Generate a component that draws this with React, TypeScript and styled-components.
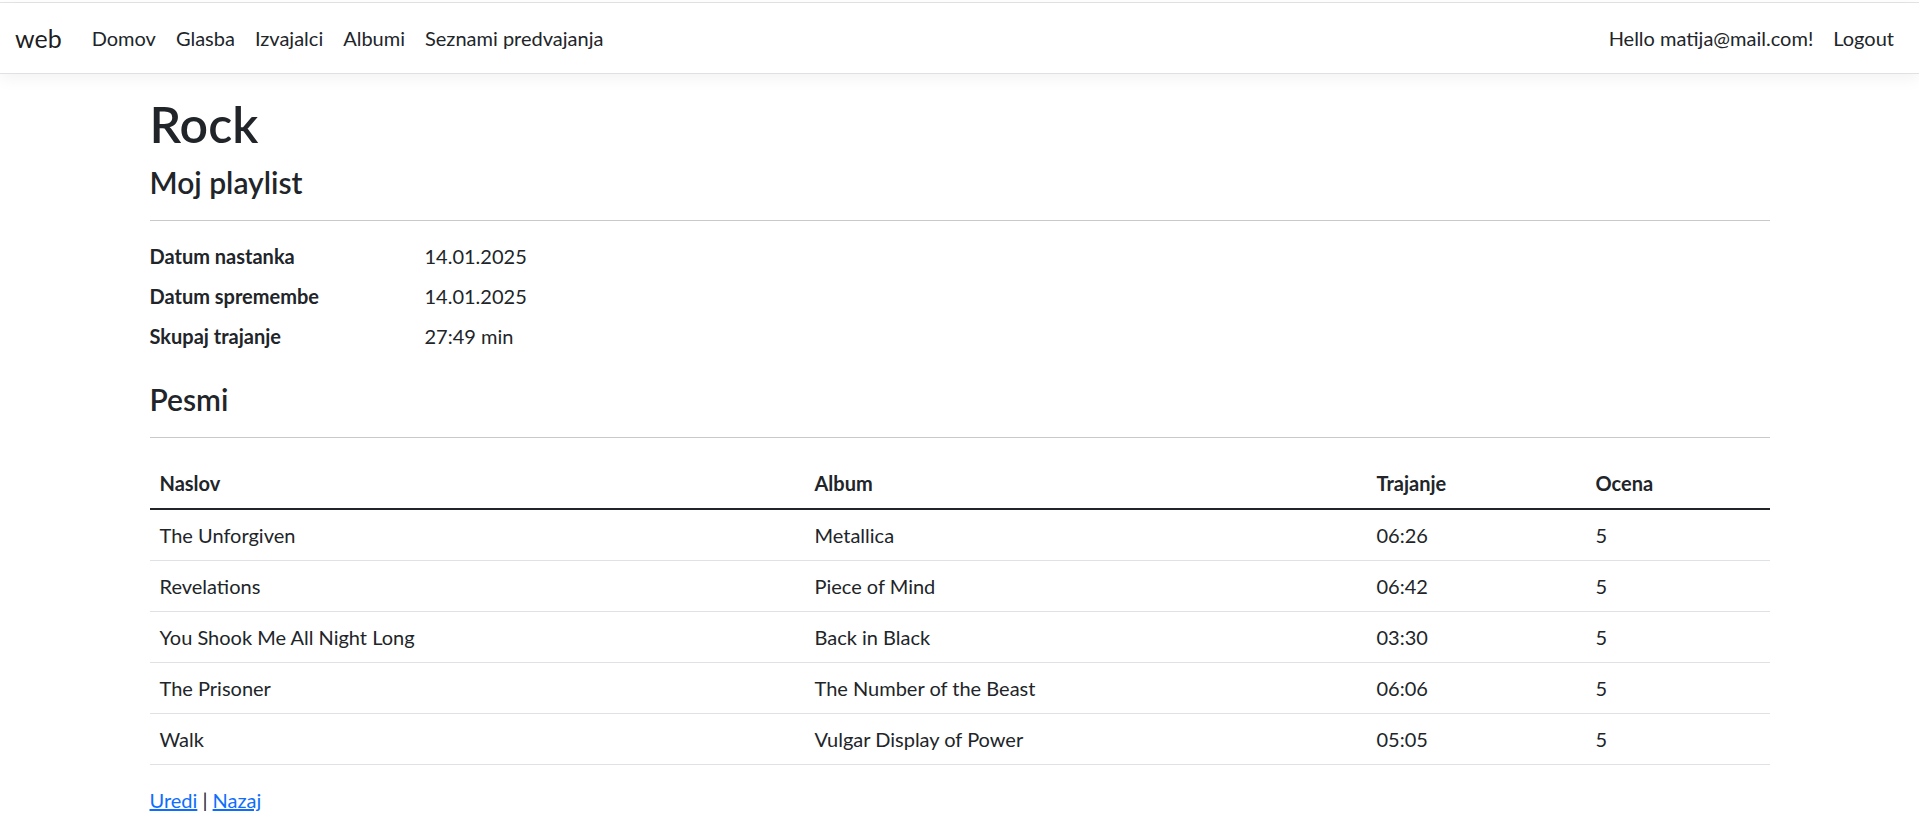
import React from "react";
import styled, { createGlobalStyle } from "styled-components";

const FONT = `Lato, "Open Sans", "Noto Sans", sans-serif`;

const Global = createGlobalStyle`
  html, body { margin: 0; padding: 0; background: #fff; }
  body {
    font-family: ${FONT};
    font-size: 20px;
    line-height: 30px;
    color: #212529;
  }
  * { box-sizing: border-box; }
`;

const TopLine = styled.div`
  height: 3px;
  border-bottom: 1px solid #e4e4e4;
  background: #fff;
`;

const NavBar = styled.nav`
  display: flex;
  align-items: center;
  justify-content: space-between;
  height: 71px;
  padding: 0 15px;
  background: #fff;
  border-bottom: 1.25px solid #dee2e6;
  box-shadow: 0 5px 15px rgba(0, 0, 0, 0.05);
  margin-bottom: 20px;
`;

const NavGroup = styled.div`
  display: flex;
  align-items: center;
`;

const Brand = styled.a`
  font-size: 25px;
  line-height: 37px;
  color: rgba(0, 0, 0, 0.9);
  text-decoration: none;
  margin-right: 20px;
`;

const NavLink = styled.a`
  padding: 10px 10px;
  color: #212529;
  text-decoration: none;
  font-size: 20px;
`;

const Greeting = styled.span`
  padding: 10px 10px;
  color: #212529;
`;

const Container = styled.main`
  width: 1620px;
  margin: 0 auto;
  padding-bottom: 20px;
`;

const Title = styled.h1`
  font-size: 50px;
  line-height: 60px;
  font-weight: 600;
  margin: 1px 0 10px;
`;

const SubTitle = styled.h4<{ $mt?: number }>`
  font-size: 30px;
  line-height: 36px;
  font-weight: 600;
  margin: ${(p) => p.$mt ?? 0}px 0 20px;
`;

const Rule = styled.hr`
  border: 0;
  border-top: 1.25px solid #c8c9ca;
  margin: 0 0 20px;
`;

const DefList = styled.dl`
  display: grid;
  grid-template-columns: 275px 1fr;
  margin: 0 0 20px;
`;

const Term = styled.dt`
  font-weight: 700;
  margin: 0 0 10px;
`;

const Desc = styled.dd`
  margin: 0 0 10px;
`;

const Table = styled.table`
  width: 100%;
  border-collapse: collapse;
  margin-bottom: 20px;
`;

const HeadCell = styled.th`
  text-align: left;
  font-weight: 700;
  padding: 10px;
  border-bottom: 2px solid #212529;
`;

const Cell = styled.td`
  padding: 10px;
  border-bottom: 1.25px solid #dee2e6;
`;

const Links = styled.div`
  line-height: 30px;
`;

const Link = styled.a`
  color: #0d6efd;
  text-decoration: underline;
`;

const songs = [
  ["The Unforgiven", "Metallica", "06:26", "5"],
  ["Revelations", "Piece of Mind", "06:42", "5"],
  ["You Shook Me All Night Long", "Back in Black", "03:30", "5"],
  ["The Prisoner", "The Number of the Beast", "06:06", "5"],
  ["Walk", "Vulgar Display of Power", "05:05", "5"],
];

const colWidths = [655, 562, 219, 184];

export default function App() {
  return (
    <>
      <Global />
      <TopLine />
      <NavBar>
        <NavGroup>
          <Brand href="#">web</Brand>
          <NavLink href="#">Domov</NavLink>
          <NavLink href="#">Glasba</NavLink>
          <NavLink href="#">Izvajalci</NavLink>
          <NavLink href="#">Albumi</NavLink>
          <NavLink href="#">Seznami predvajanja</NavLink>
        </NavGroup>
        <NavGroup>
          <Greeting>Hello matija@mail.com!</Greeting>
          <NavLink href="#">Logout</NavLink>
        </NavGroup>
      </NavBar>
      <Container>
        <Title>Rock</Title>
        <SubTitle>Moj playlist</SubTitle>
        <Rule />
        <DefList>
          <Term>Datum nastanka</Term>
          <Desc>14.01.2025</Desc>
          <Term>Datum spremembe</Term>
          <Desc>14.01.2025</Desc>
          <Term>Skupaj trajanje</Term>
          <Desc>27:49 min</Desc>
        </DefList>
        <SubTitle $mt={1}>Pesmi</SubTitle>
        <Rule />
        <Table>
          <colgroup>
            {colWidths.map((w, i) => (
              <col key={i} style={{ width: w }} />
            ))}
          </colgroup>
          <thead>
            <tr>
              <HeadCell>Naslov</HeadCell>
              <HeadCell>Album</HeadCell>
              <HeadCell>Trajanje</HeadCell>
              <HeadCell>Ocena</HeadCell>
            </tr>
          </thead>
          <tbody>
            {songs.map((s) => (
              <tr key={s[0]}>
                {s.map((c, i) => (
                  <Cell key={i}>{c}</Cell>
                ))}
              </tr>
            ))}
          </tbody>
        </Table>
        <Links>
          <Link href="#">Uredi</Link> | <Link href="#">Nazaj</Link>
        </Links>
      </Container>
    </>
  );
}
